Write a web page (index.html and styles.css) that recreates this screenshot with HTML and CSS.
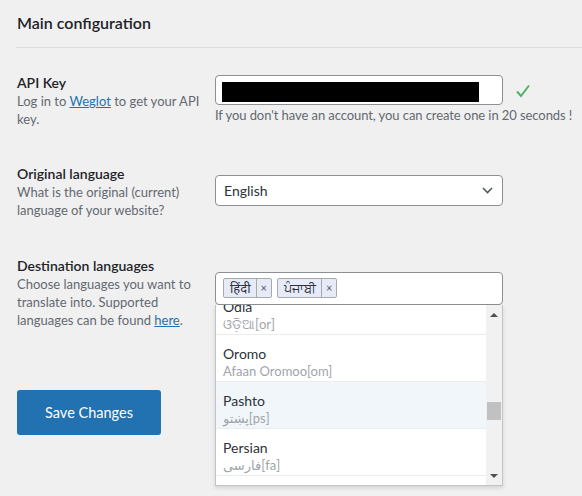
FILE: index.html
```html
<!DOCTYPE html>
<html lang="en">
<head>
<meta charset="utf-8">
<title>Main configuration</title>
<link rel="stylesheet" href="styles.css">
</head>
<body>
<div class="page">
  <div class="header"><h2 class="title">Main configuration</h2></div>

  <div class="row row-api">
    <div class="label-col">
      <div class="label">API Key</div>
      <div class="desc">Log in to <a href="#" class="link">Weglot</a> to get your API key.</div>
    </div>
    <div class="field-col field-api">
      <div class="input-line">
        <div class="input"><span class="redact"></span></div>
        <svg class="check" width="14" height="14" viewBox="0 0 14 14"><path d="M1 7.5 L5 12 L13 1.5" fill="none" stroke="#4cb462" stroke-width="2"/></svg>
      </div>
      <div class="hint">If you don't have an account, you can create one in 20 seconds !</div>
    </div>
  </div>

  <div class="row row-orig">
    <div class="label-col">
      <div class="label">Original language</div>
      <div class="desc">What is the original (current) language of your website?</div>
    </div>
    <div class="field-col field-orig">
      <div class="select">
        <span class="select-text">English</span>
        <svg class="chevron" width="11" height="7" viewBox="0 0 11 7"><path d="M1 1 L5.5 5.5 L10 1" fill="none" stroke="#50575e" stroke-width="1.6"/></svg>
      </div>
    </div>
  </div>

  <div class="row row-dest">
    <div class="label-col">
      <div class="label">Destination languages</div>
      <div class="desc">Choose languages you want to translate into. Supported languages can be found <a href="#" class="link">here</a>.</div>
    </div>
    <div class="field-col field-dest">
      <div class="multi">
        <span class="tag"><span class="tag-text">हिंदी</span><span class="tag-x">×</span></span>
        <span class="tag"><span class="tag-text">ਪੰਜਾਬੀ</span><span class="tag-x">×</span></span>
        <div class="dropdown">
          <div class="options">
            <div class="opt"><div class="opt-name">Odia</div><div class="opt-native">ଓଡ଼ିଆ[or]</div></div>
            <div class="opt"><div class="opt-name">Oromo</div><div class="opt-native">Afaan Oromoo[om]</div></div>
            <div class="opt opt-hover"><div class="opt-name">Pashto</div><div class="opt-native">پښتو[ps]</div></div>
            <div class="opt"><div class="opt-name">Persian</div><div class="opt-native">فارسی[fa]</div></div>
            <div class="opt opt-empty"></div>
          </div>
          <div class="scrollbar">
            <span class="arrow-up"></span>
            <span class="thumb"></span>
            <span class="arrow-down"></span>
          </div>
        </div>
      </div>
    </div>
  </div>

  <button class="save">Save Changes</button>
</div>
</body>
</html>
```

FILE: styles.css
```css
* { box-sizing: border-box; }
html, body { margin: 0; padding: 0; }
body {
  background: #f0f0f1;
  font-family: Lato, "Open Sans", "DejaVu Sans", sans-serif;
  color: #1d2327;
  width: 582px;
  height: 496px;
  overflow: hidden;
}
.page { padding-left: 17px; }
.header {
  margin-left: -1px;
  padding: 11px 0 12px 1px;
  border-bottom: 1px solid #dcdcde;
}
.title {
  margin: 0;
  font-size: 16px;
  line-height: 24px;
  font-weight: 600;
  color: #1d2327;
}
.row { display: flex; align-items: flex-start; }
.row-api { margin-top: 26px; }
.row-orig { margin-top: 37px; }
.row-dest { margin-top: 38px; }
.label-col { width: 190px; margin-right: 8px; }
.label {
  font-size: 14px;
  line-height: 18px;
  font-weight: 600;
  color: #1d2327;
}
.desc {
  font-size: 13px;
  line-height: 18px;
  color: #646970;
}
.link { color: #2271b1; text-decoration: underline; }
.field-api { margin-top: 1px; }
.field-orig { margin-top: 10px; }
.field-dest { margin-top: 15px; }
.input-line { display: flex; align-items: center; }
.input {
  width: 288px;
  height: 30px;
  background: #fff;
  border: 1px solid #8c8f94;
  border-radius: 4px;
  padding: 6px 0 0 6px;
}
.redact { display: block; width: 257px; height: 20px; background: #000; }
.check { margin-left: 13px; margin-top: 1px; }
.hint {
  font-size: 13px;
  line-height: 18px;
  color: #646970;
  margin-top: 1px;
  letter-spacing: -0.08px;
  white-space: nowrap;
}
.select {
  width: 288px;
  height: 31px;
  background: #fff;
  border: 1px solid #8c8f94;
  border-radius: 4px;
  display: flex;
  align-items: center;
  justify-content: space-between;
  padding: 0 9px 0 8px;
}
.select-text { font-size: 14px; color: #2c3338; }
.multi {
  position: relative;
  width: 288px;
  height: 33px;
  background: #fff;
  border: 1px solid #8c8f94;
  border-radius: 4px;
  padding: 5px 0 0 7px;
  display: flex;
  align-items: flex-start;
  gap: 5px;
}
.tag {
  display: inline-flex;
  height: 20px;
  border: 1px solid #a7aaad;
  background: #e7ebf7;
  border-radius: 2px;
  font-size: 14px;
  line-height: 18px;
  color: #2c3338;
}
.tag-text { padding: 0 5px 0 6px; font-family: "Noto Sans", Lato, sans-serif; font-size: 13px; }
.tag-x {
  border-left: 1px solid #a7aaad;
  padding: 0 4px;
  font-size: 11px;
  color: #50575e;
}
.dropdown {
  position: absolute;
  left: -1px;
  top: 32px;
  width: 288px;
  height: 181px;
  background: #fff;
  border: 1px solid #c3c4c7;
  border-top: none;
  box-shadow: 0 2px 4px rgba(0,0,0,0.12);
  display: flex;
  overflow: hidden;
  z-index: 2;
}
.options { flex: 1; margin-top: -17px; }
.opt {
  height: 47px;
  padding: 10px 0 0 7px;
  border-bottom: 1px solid #ececec;
}
.opt-empty { border-bottom: none; }
.opt-hover { background: #f0f6fa; }
.opt-name { font-size: 14px; line-height: 18px; color: #2c3338; }
.opt-native { font-size: 13px; line-height: 17px; color: #a0a5aa; }
.scrollbar {
  width: 16px;
  background: #f1f1f1;
  position: relative;
}
.arrow-up, .arrow-down {
  position: absolute;
  left: 4px;
  width: 0; height: 0;
  border-left: 4px solid transparent;
  border-right: 4px solid transparent;
}
.arrow-up { top: 8px; border-bottom: 4px solid #505050; }
.arrow-down { top: 169px; border-top: 4px solid #505050; }
.thumb {
  position: absolute;
  left: 1px;
  top: 97px;
  width: 14px;
  height: 18px;
  background: #c1c1c1;
}
.save {
  display: block;
  margin-top: 61px;
  width: 144px;
  height: 45px;
  background: #2271b1;
  color: #fff;
  border: none;
  border-radius: 3px;
  font-family: Lato, "Open Sans", sans-serif;
  font-size: 14.5px;
}
```
